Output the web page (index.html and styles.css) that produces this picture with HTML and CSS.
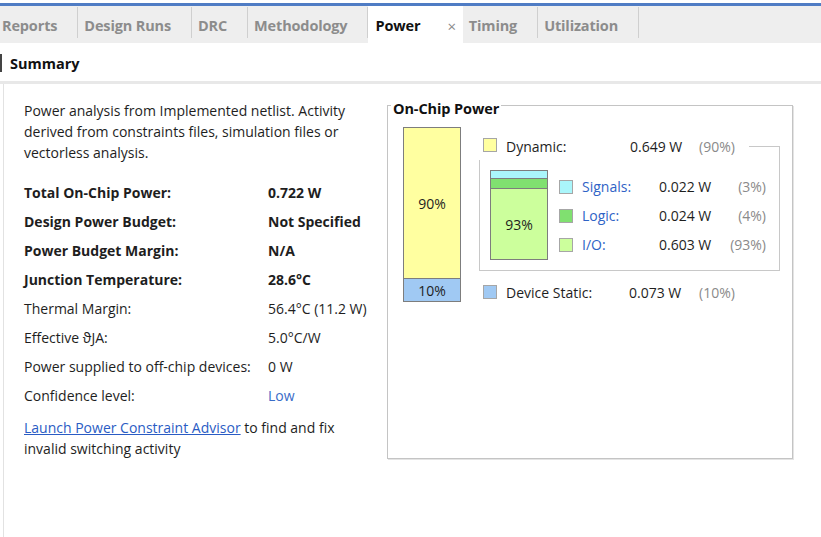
FILE: index.html
```html
<!DOCTYPE html>
<html>
<head>
<meta charset="utf-8">
<link rel="stylesheet" href="styles.css">
</head>
<body>
<div class="app">
  <div class="topgap"></div>
  <div class="tabbar">
    <div class="tabs">
      <div class="tab">Reports</div><div class="sep"></div>
      <div class="tab">Design Runs</div><div class="sep"></div>
      <div class="tab">DRC</div><div class="sep"></div>
      <div class="tab">Methodology</div><div class="sep"></div>
      <div class="tab active">Power<span class="close">×</span></div>
      <div class="tab">Timing</div><div class="sep"></div>
      <div class="tab">Utilization</div><div class="sep"></div>
    </div>
  </div>
  <div class="section-head"><span class="mark"></span>Summary</div>
  <div class="content">
    <div class="left">
      <p class="intro">Power analysis from Implemented netlist. Activity derived from constraints files, simulation files or vectorless analysis.</p>
      <div class="rows">
        <div class="row bold"><span class="lbl">Total On-Chip Power:</span><span class="val">0.722 W</span></div>
        <div class="row bold"><span class="lbl">Design Power Budget:</span><span class="val">Not Specified</span></div>
        <div class="row bold"><span class="lbl">Power Budget Margin:</span><span class="val">N/A</span></div>
        <div class="row bold"><span class="lbl">Junction Temperature:</span><span class="val">28.6°C</span></div>
        <div class="row"><span class="lbl">Thermal Margin:</span><span class="val">56.4°C (11.2 W)</span></div>
        <div class="row"><span class="lbl">Effective ϑJA:</span><span class="val">5.0°C/W</span></div>
        <div class="row"><span class="lbl">Power supplied to off-chip devices:</span><span class="val">0 W</span></div>
        <div class="row"><span class="lbl">Confidence level:</span><span class="val blue">Low</span></div>
      </div>
      <p class="advisor"><a class="link" href="#">Launch Power Constraint Advisor</a> to find and fix invalid switching activity</p>
    </div>
    <div class="group">
      <div class="group-title">On-Chip Power</div>
      <div class="chart">
        <div class="bar">
          <div class="seg seg-dyn">90%</div>
          <div class="seg seg-static">10%</div>
        </div>
        <div class="legend">
          <div class="dyn-head">
            <span class="sq sq-yellow"></span>
            <span class="l-lbl">Dynamic:</span>
            <span class="l-val">0.649 W</span>
            <span class="l-pct">(90%)</span>
            <span class="bracket"></span>
          </div>
          <div class="dyn-body">
            <div class="minibar">
              <div class="mseg mseg-sig"></div>
              <div class="mseg mseg-logic"></div>
              <div class="mseg mseg-io">93%</div>
            </div>
            <div class="sublegend">
              <div class="srow"><span class="sq sq-cyan"></span><span class="s-lbl">Signals</span><span class="s-colon">:</span><span class="s-val">0.022 W</span><span class="s-pct">(3%)</span></div>
              <div class="srow"><span class="sq sq-green"></span><span class="s-lbl">Logic</span><span class="s-colon">:</span><span class="s-val">0.024 W</span><span class="s-pct">(4%)</span></div>
              <div class="srow"><span class="sq sq-lgreen"></span><span class="s-lbl">I/O</span><span class="s-colon">:</span><span class="s-val">0.603 W</span><span class="s-pct">(93%)</span></div>
            </div>
          </div>
          <div class="static-row">
            <span class="sq sq-blue"></span>
            <span class="l-lbl st">Device Static:</span>
            <span class="l-val st">0.073 W</span>
            <span class="l-pct">(10%)</span>
          </div>
        </div>
      </div>
    </div>
  </div>
</div>
</body>
</html>
```
FILE: styles.css
```css
* { box-sizing: border-box; }
html, body { margin: 0; padding: 0; background: #fff; }
body {
  width: 821px; height: 537px; overflow: hidden;
  font-family: "Open Sans", "Noto Sans", sans-serif;
  font-size: 14px; color: #1e1e1e;
}
.app { display: flex; flex-direction: column; height: 537px; }
.topgap { height: 3px; background: #fff; }
.tabbar {
  border-top: 3px solid #4f7cc4;
  background: #eeeeee;
  height: 40px;
  overflow: hidden;
}
.tabs { display: flex; margin-left: -4px; height: 37px; }
.tab {
  display: flex; align-items: center;
  height: 37px;
  padding: 2px 20px 0 6px;
  font-weight: 700; font-size: 14.5px;
  color: #8c8c8c;
  white-space: nowrap;
  letter-spacing: -0.15px;
}
.tab.active { background: #fff; color: #111; padding: 2px 7px 0 7px; }
.close { color: #8a8a8a; font-weight: 400; font-size: 15px; margin-left: 27px; }
.sep { width: 1px; height: 31px; margin-top: 1px; background: #cfcfcf; flex: none; }

.section-head {
  height: 41px;
  padding-top: 2px;
  display: flex; align-items: center;
  border-bottom: 3px solid #e8e8e8;
  font-weight: 700; font-size: 14.5px; color: #111;
}
.mark { width: 2px; height: 18px; background: #444; margin-right: 8px; }

.content {
  flex: 1;
  display: flex; align-items: flex-start;
  margin-left: 3px;
  border-left: 1px solid #e2e2e2;
  padding: 16px 0 0 20px;
}
.left { width: 363px; flex: none; }
.intro { margin: 0; line-height: 21px; padding-right: 8px; }
.rows { margin-top: 15px; }
.row { display: flex; height: 29px; align-items: center; white-space: nowrap; }
.row.bold { font-weight: 700; }
.lbl { width: 244px; flex: none; }
.blue { color: #3a6cc8; }
.advisor { margin: 7px 0 0; line-height: 21px; padding-right: 14px; }
.link { color: #2a5cc4; text-decoration: underline; }

.group {
  width: 406px; height: 354px; flex: none;
  margin-top: 5px;
  border: 1px solid #c4c4c4;
  box-shadow: 1px 1px 0 #e4e4e4;
  display: flex; flex-direction: column;
}
.group-title {
  align-self: flex-start;
  margin: -6px 0 0 3px;
  padding: 0 2px;
  background: #fff;
  line-height: 18px;
  font-weight: 700; font-size: 14.5px; color: #111;
  letter-spacing: -0.1px;
}
.chart { display: flex; align-items: flex-start; margin-top: 9px; padding-left: 15px; }
.bar {
  width: 58px; height: 175px; flex: none;
  border: 1px solid #7d7d7d;
  display: flex; flex-direction: column;
}
.seg { display: flex; align-items: center; justify-content: center; }
.seg-dyn { flex: 1; background: #ffffa0; }
.seg-static { height: 23px; background: #a0c9f3; border-top: 1px solid #7d7d7d; }

.legend { width: 301px; margin-left: 18px; flex: none; }
.dyn-head { display: flex; align-items: flex-start; height: 24px; padding-left: 4px; margin-top: 9px; }
.sq { width: 14px; height: 14px; flex: none; border: 1px solid #a6a6a6; margin-right: 9px; }
.dyn-head .sq { margin-top: 2px; }
.sq-yellow { background: #ffffa0; }
.sq-blue { background: #a0c9f3; }
.sq-cyan { background: #aaf6fb; }
.sq-green { background: #80e070; }
.sq-lgreen { background: #ccff9c; }
.l-lbl { width: 124px; line-height: 21px; flex: none; white-space: nowrap; }
.l-val { width: 69px; line-height: 21px; flex: none; white-space: nowrap; }
.l-lbl.st { width: 123px; }
.l-val.st { width: 70px; }
.l-pct { line-height: 21px; color: #8a8a8a; white-space: nowrap; }
.bracket {
  flex: 1; height: 14px; margin: 10px 0 0 14px;
  border-top: 1px solid #c8c8c8; border-right: 1px solid #c8c8c8;
}
.dyn-body {
  display: flex; align-items: center;
  border: 1px solid #c8c8c8; border-top: none;
  padding: 10px 0 10px 10px;
}
.minibar {
  width: 58px; height: 90px; flex: none;
  border: 1px solid #7d7d7d;
  display: flex; flex-direction: column;
}
.mseg-sig { height: 8px; background: #aaf6fb; border-bottom: 1px solid #7d7d7d; }
.mseg-logic { height: 10px; background: #80e070; border-bottom: 1px solid #7d7d7d; }
.mseg-io { flex: 1; background: #ccff9c; display: flex; align-items: center; justify-content: center; }
.sublegend { margin-left: 11px; width: 207px; padding-top: 1px; }
.srow { display: flex; align-items: center; height: 29px; white-space: nowrap; }
.s-lbl { color: #2f63c6; }
.s-colon { color: #2f63c6; margin-right: auto; }
.s-val { width: 60px; }
.s-pct { width: 47px; text-align: right; color: #8a8a8a; }
.static-row { display: flex; align-items: center; height: 22px; margin-top: 10px; padding-left: 4px; }
```
